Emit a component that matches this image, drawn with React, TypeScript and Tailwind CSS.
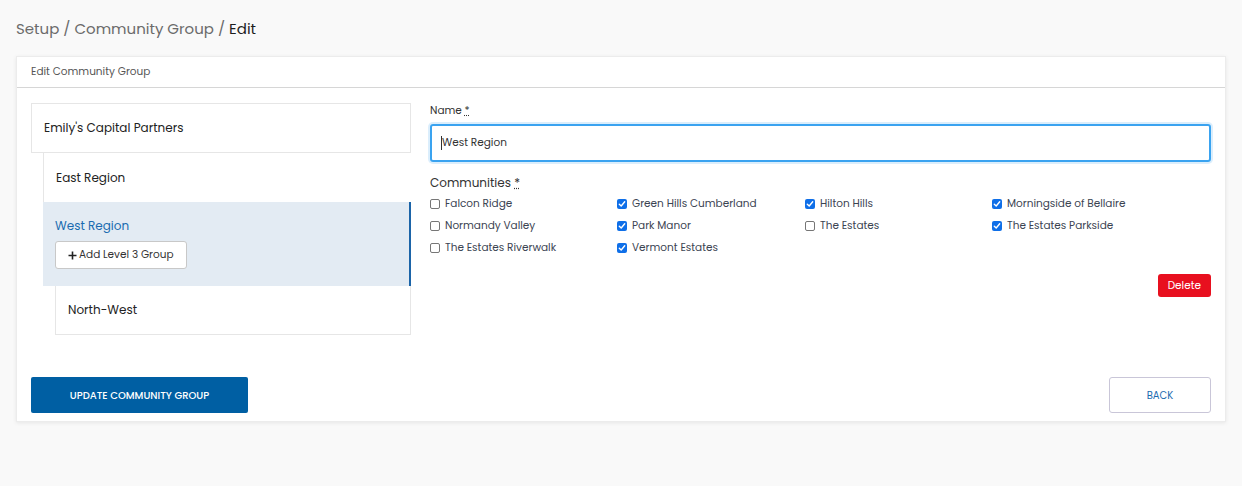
import React from "react";

const communities: { name: string; checked: boolean }[] = [
    { name: "Falcon Ridge", checked: false },
    { name: "Green Hills Cumberland", checked: true },
    { name: "Hilton Hills", checked: true },
    { name: "Morningside of Bellaire", checked: true },
    { name: "Normandy Valley", checked: false },
    { name: "Park Manor", checked: true },
    { name: "The Estates", checked: false },
    { name: "The Estates Parkside", checked: true },
    { name: "The Estates Riverwalk", checked: false },
    { name: "Vermont Estates", checked: true },
];

function Check({ checked }: { checked: boolean }) {
    if (checked) {
        return (
            <span className="flex items-center justify-center w-[10px] h-[10px] rounded-[2px] bg-[#0f6fe8] shrink-0">
                <svg width="8" height="8" viewBox="0 0 8 8" fill="none">
                    <path d="M1.3 4.2 L3.2 6 L6.7 1.8" stroke="white" strokeWidth="1.4" strokeLinecap="round" strokeLinejoin="round" />
                </svg>
            </span>
        );
    }
    return <span className="w-[10px] h-[10px] rounded-[2px] border border-[#767676] bg-white shrink-0" />;
}

export default function App() {
    return (
        <div className="w-[1242px] h-[486px] bg-[#f9f9f9] px-4 pt-[18px] font-['Poppins','Inter',sans-serif] text-[#222]">
            <div className="text-[15px] leading-[22px] text-[#6b6b6b]">
                Setup / Community Group / <span className="text-[#1e1e1e]">Edit</span>
            </div>

            <div className="mt-[16px] bg-white shadow-[0_1px_4px_rgba(0,0,0,0.08)] border border-[#ececec]">
                <div className="h-[31px] flex items-center px-[14px] text-[10.5px] text-[#555] border-b border-[#d6d6d6]">
                    Edit Community Group
                </div>

                <div className="px-[14px] pt-[15px] pb-[8px]">
                    <div className="flex gap-[19px]">
                        {/* tree */}
                        <div className="w-[380px] shrink-0 text-[12px] text-[#222]">
                            <div className="h-[50px] flex items-center px-3 border border-[#e6e6e6]">Emily's Capital Partners</div>
                            <div className="ml-3">
                                <div className="h-[49px] flex items-center px-3 border-l border-[#e6e6e6]">East Region</div>
                                <div className="h-[84px] bg-[#e3ebf3] border-r-2 border-[#1b64a8] px-3 pt-[15px]">
                                    <div className="text-[#1a6bb0] leading-[18px]">West Region</div>
                                    <button className="mt-[6px] h-[28px] flex items-center gap-[2px] px-[12px] bg-white border border-[#c8c8c8] rounded-[3px] text-[10.5px] text-[#333]">
                                        <svg width="9" height="9" viewBox="0 0 9 9"><path d="M4.5 0.5v8M0.5 4.5h8" stroke="#222" strokeWidth="1.6" /></svg>
                                        Add Level 3 Group
                                    </button>
                                </div>
                                <div className="ml-3 h-[49px] flex items-center px-3 border border-t-0 border-[#e6e6e6]">North-West</div>
                            </div>
                        </div>

                        {/* form */}
                        <div className="flex-1">
                            <div className="text-[10.5px] leading-[14px] text-[#333] mt-[1px]">
                                Name <span className="underline decoration-dotted">*</span>
                            </div>
                            <div className="mt-[6px] h-[38px] flex items-center px-[9px] border-2 border-[#3aa3f0] rounded-[3px] shadow-[0_0_0_2px_rgba(58,163,240,0.18)] text-[10.5px] text-[#333]">
                                <span className="w-px h-[14px] bg-[#333]" />
                                West Region
                            </div>
                            <div className="mt-[13px] text-[12px] leading-[16px] text-[#333]">
                                Communities <span className="underline decoration-dotted">*</span>
                            </div>
                            <div className="mt-[2px] grid grid-cols-[187px_188px_187px_1fr]">
                                {communities.map((c) => (
                                    <label key={c.name} className="h-[22px] flex items-center gap-[5px] text-[10.5px] text-[#3b4452]">
                                        <Check checked={c.checked} />
                                        {c.name}
                                    </label>
                                ))}
                            </div>
                            <div className="flex justify-end mt-[15px]">
                                <button className="h-[23px] px-[10px] bg-[#e8101f] rounded-[3px] text-white text-[10.5px]">Delete</button>
                            </div>
                        </div>
                    </div>

                    <div className="mt-[42px] flex justify-between">
                        <button className="w-[217px] h-[36px] bg-[#005fa3] rounded-[2px] text-white text-[10px] font-medium uppercase">
                            Update Community Group
                        </button>
                        <button className="w-[102px] h-[36px] bg-white border border-[#c9c6d8] rounded-[3px] text-[#1a6bb0] text-[10px] uppercase">
                            Back
                        </button>
                    </div>
                </div>
            </div>
        </div>
    );
}
